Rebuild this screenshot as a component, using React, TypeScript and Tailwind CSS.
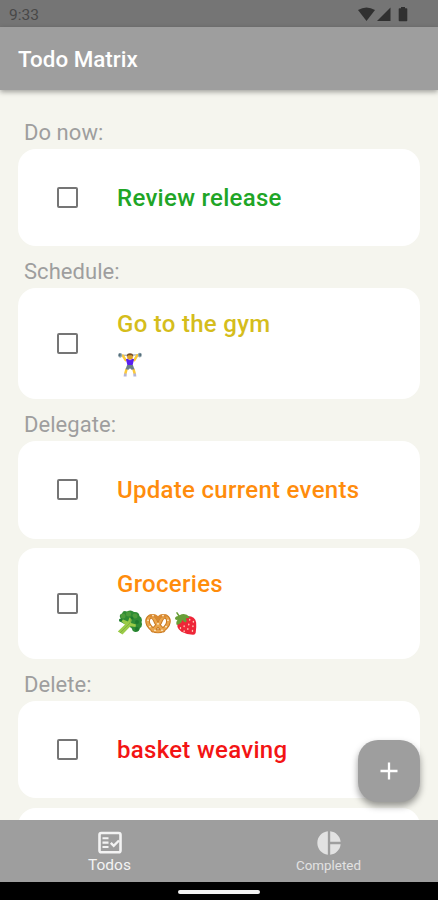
import { MdPieChart } from "react-icons/md";

function Lifter() {
  return (
    <svg viewBox="0 0 26 28" className="mt-[2px] h-[27px] w-[26px]">
      <path d="M3 4.5 23 4" stroke="#8a9296" strokeWidth="1" />
      <path d="M8.5 9.5 5.5 4.7M17.5 9.5 20.5 4.5" stroke="#fcc93a" strokeWidth="2.6" strokeLinecap="round" />
      <path d="M9.5 18.5 8 24M16.5 18.5 18 24" stroke="#fcc93a" strokeWidth="2.6" />
      <ellipse cx="2.8" cy="4.5" rx="2.1" ry="2.5" fill="#90a4ae" />
      <ellipse cx="2.3" cy="4.2" rx="1" ry="1.5" fill="#546e7a" />
      <ellipse cx="23.2" cy="4.2" rx="2.1" ry="2.5" fill="#90a4ae" />
      <ellipse cx="23.6" cy="4" rx="1" ry="1.5" fill="#546e7a" />
      <rect x="10" y="3" width="6" height="6" rx="2.8" fill="#dca02a" />
      <path d="M9.7 6V4.5Q10 2.3 13 2.3t3.3 2.2V6L14.8 4.4h-3.6z" fill="#754c28" />
      <path d="M8.8 8.5 10.4 8 13 9.7 15.6 8l1.6.5-1.5 6.2h-5.4z" fill="#5a1ff0" />
      <path d="M10 14.5h6l1.6 4.5-3 .4-1.6-1.6-1.6 1.6-3-.4z" fill="#6c7f88" />
      <path d="M6.8 23.3h2.7v3.2H6.4zM16.5 23.3h2.7l.4 3.2h-3.1z" fill="#b5b5d5" />
    </svg>
  );
}

function Broccoli() {
  return (
    <svg viewBox="0 0 26 26" className="h-[26px] w-[26px]">
      <path d="M4 9Q1 5 5 3.5 6 0 10 1.5 14-.8 17 2q5-.5 5.5 4 3.5 2.5 2 6 1.5 4-1.5 6-1 4.5-5 4-3-1-3.5-4L2 11z" fill="#2e8b35" />
      <path d="M.8 21.5 8 14.5 4.5 11.5l1.5-2 5 2 1.5-4 2.3 1-.8 4.5 5 1.500-.5 2.500-5-.7-8 8.200z" fill="#9bcb48" />
      <path d="m3 23 10-10M13 13l1-4" stroke="#7cab40" strokeWidth=".8" fill="none" />
      <g fill="#4c9c3c">
        <circle cx="6" cy="6" r="2.5" />
        <circle cx="11.5" cy="4" r="2.5" />
        <circle cx="18" cy="6" r="2.5" />
      </g>
      <g fill="#1f7a2d">
        <circle cx="20" cy="12" r="2" />
        <circle cx="15" cy="8" r="1.5" />
        <circle cx="20" cy="19" r="2" />
        <circle cx="3.5" cy="10" r="1.5" />
      </g>
    </svg>
  );
}

function Pretzel() {
  return (
    <svg viewBox="0 0 26 24" preserveAspectRatio="none" className="h-[22px] w-[26px]" fill="none">
      <g stroke="#c9781f" strokeWidth="4.6" strokeLinecap="round" strokeLinejoin="round">
        <path d="M8 20 14.5 12Q17.500 4 21 5q4 3 1.500 9-4 7-9.500 7t-9.500-7Q1 8 5 5q3.500-1 6.500 7L18 20" />
      </g>
      <g stroke="#e9a44c" strokeWidth="2.6" strokeLinecap="round" strokeLinejoin="round">
        <path d="M8 20 14.5 12Q17.500 4 21 5q4 3 1.500 9-4 7-9.500 7t-9.500-7Q1 8 5 5q3.500-1 6.500 7L18 20" />
        <path d="M6 4.500q4-2 7 3 3-5 7-3" stroke="#d98a32" strokeWidth="3.500" />
      </g>
      <g fill="#fff3d8">
        <circle cx="3" cy="9" r=".9" />
        <circle cx="8" cy="4" r=".9" />
        <circle cx="18" cy="4" r=".9" />
        <circle cx="23" cy="9" r=".9" />
        <circle cx="13" cy="13" r=".9" />
        <circle cx="10" cy="20" r=".9" />
        <circle cx="17" cy="20" r=".9" />
        <circle cx="5" cy="16" r=".9" />
        <circle cx="21" cy="16" r=".9" />
      </g>
    </svg>
  );
}

function Strawberry() {
  return (
    <svg viewBox="0 0 26 26" className="ml-[1px] h-[25px] w-[24px]">
      <path d="M5 10Q8 5 15 5q8 .5 9 7 .5 5-.5 11-.5 2.5-3 2.3-7-.3-12.5-3.3Q1 17 5 10z" fill="#ee2638" />
      <path d="M2.5 2Q2 .5 3.5.5L6 4q6-3.5 11 2-1 2-4 1 1 3 0 5-3-.5-4-3-1 5-6 5.500Q1.500 12 4 9 1 9.500 1 7q1-2 3.500-2z" fill="#689f38" />
      <g fill="#ffc9b5">
        <ellipse cx="17" cy="9" rx=".8" ry="1.1" />
        <ellipse cx="21" cy="11" rx=".8" ry="1.1" />
        <ellipse cx="16" cy="14" rx=".8" ry="1.1" />
        <ellipse cx="20.5" cy="16" rx=".8" ry="1.1" />
        <ellipse cx="11" cy="16" rx=".8" ry="1.1" />
        <ellipse cx="7" cy="18" rx=".8" ry="1.1" />
        <ellipse cx="15" cy="19" rx=".8" ry="1.1" />
        <ellipse cx="20" cy="21" rx=".8" ry="1.1" />
        <ellipse cx="11" cy="21.5" rx=".8" ry="1.1" />
      </g>
    </svg>
  );
}

function ChecklistIcon() {
  return (
    <svg viewBox="0 0 28 28" className="h-[28px] w-[28px]" fill="none" stroke="currentColor">
      <rect x="3.5" y="4" width="21" height="19.2" rx="1.8" strokeWidth="2.6" />
      <path d="M6.5 9.200h6M6.500 13.600h6M6.500 18h6" strokeWidth="2.1" />
      <path d="m14.800 13.900 2.900 2.900 5.300-5.300" strokeWidth="2.4" />
    </svg>
  );
}

type CardProps = { title: string; color: string; children?: React.ReactNode };

function Card({ title, color, children }: CardProps) {
  return (
    <div className={`flex shrink-0 items-center rounded-[18px] bg-white pl-[39px] ${children ? "h-[111.3px]" : "h-[97.3px]"}`}>
      <div className="h-[21px] w-[21px] shrink-0 rounded-[2px] border-2 border-[#757575]" />
      <div className="ml-[39px] flex flex-col">
        <div className={`text-[24px] leading-[28px] font-medium tracking-[0.29px] whitespace-nowrap ${color}`}>{title}</div>
        {children && <div className="mt-[11px] flex h-[28px] items-center gap-[2px]">{children}</div>}
      </div>
    </div>
  );
}

function Section({ label, children }: { label: string; children: React.ReactNode }) {
  return (
    <section className="flex flex-col">
      <h2 className="flex h-[41.8px] items-center pt-[9px] pl-[6px] text-[22px] leading-[26px] tracking-[0.05px] text-[#9e9e9e]">{label}</h2>
      <div className="flex flex-col gap-[9.4px]">{children}</div>
    </section>
  );
}

export default function App() {
  return (
    <div className="flex h-[900px] w-full flex-col overflow-hidden bg-[#f5f5ee] font-['Roboto',sans-serif]">
      <div className="flex h-[27px] shrink-0 items-center justify-between bg-[#757575] pr-[30px] pl-[9px] text-[#303030]">
        <span className="pt-[2px] text-[15.5px] leading-[20px] text-[#484848]">9:33</span>
        <svg viewBox="0 0 50 16" className="h-[16px] w-[50px]" fill="currentColor">
          <path d="M0 4Q8.5-1 17 4L8.5 15z" />
          <path d="M32.5 1.5V15H19z" />
          <path d="M43 1h4v1.2h1.5q.8 0 .8.8v11.500q0 .8-.8.800h-7q-.8 0-.8-.8V3q0-.8.8-.8H43z" />
        </svg>
      </div>
      <header className="z-10 flex h-[63px] shrink-0 items-center bg-[#9e9e9e] pl-[18px] shadow-[0_2px_5px_rgba(0,0,0,0.35)]">
        <h1 className="text-[22.4px] leading-[28px] font-medium text-white">Todo Matrix</h1>
      </header>
      <main className="flex min-h-0 flex-1 flex-col overflow-hidden px-[18px] pt-[17.3px]">
        <Section label="Do now:">
          <Card title="Review release" color="text-[#20a526]" />
        </Section>
        <Section label="Schedule:">
          <Card title="Go to the gym" color="text-[#d5bd1c]">
            <Lifter />
          </Card>
        </Section>
        <Section label="Delegate:">
          <Card title="Update current events" color="text-[#ff8c0c]" />
          <Card title="Groceries" color="text-[#ff8c0c]">
            <Broccoli />
            <Pretzel />
            <Strawberry />
          </Card>
        </Section>
        <Section label="Delete:">
          <Card title="basket weaving" color="text-[#f31414]" />
          <Card title="" color="text-[#f31414]" />
        </Section>
      </main>
      <button className="absolute top-[740px] left-[358px] flex h-[62px] w-[62px] items-center justify-center rounded-[20px] bg-[#9e9e9e] shadow-[0_4px_7px_rgba(0,0,0,0.4)]">
        <svg viewBox="0 0 18 18" className="h-[18px] w-[18px]">
          <path d="M9 .5v17M.5 9h17" stroke="white" strokeWidth="2.3" />
        </svg>
      </button>
      <nav className="z-10 grid h-[62px] shrink-0 grid-cols-2 bg-[#9e9e9e]">
        <div className="flex flex-col items-center pt-[8.5px] text-[#f3f3f3]">
          <ChecklistIcon />
          <span className="-mt-px text-[15.5px] leading-[18px]">Todos</span>
        </div>
        <div className="flex flex-col items-center pt-[8.5px] text-[#e2e2e2]">
          <MdPieChart size={28} />
          <span className="text-[13.4px] leading-[18px]">Completed</span>
        </div>
      </nav>
      <div className="z-10 flex h-[18px] shrink-0 justify-center bg-black pt-[8px]">
        <div className="h-[4px] w-[82px] rounded-full bg-[#f2f2f2]" />
      </div>
    </div>
  );
}
